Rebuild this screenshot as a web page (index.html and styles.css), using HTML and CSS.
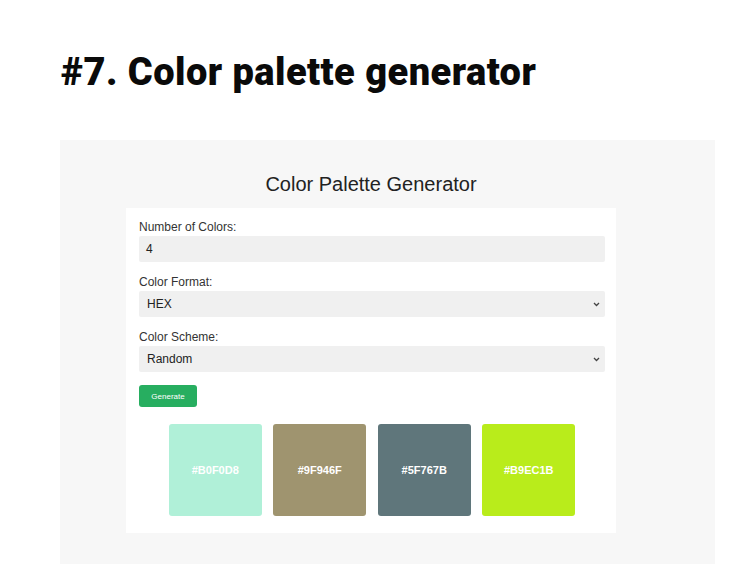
FILE: index.html
```html
<!DOCTYPE html>
<html>
<head>
<meta charset="utf-8">
<link rel="stylesheet" href="styles.css">
</head>
<body>
<h1 class="title">#7. Color palette generator</h1>
<div class="panel">
  <div class="app">
    <h2 class="app-title">Color Palette Generator</h2>
    <div class="card">
      <label class="label">Number of Colors:</label>
      <div class="field">4</div>
      <label class="label">Color Format:</label>
      <div class="field select"><span>HEX</span><svg class="chev" width="7" height="5" viewBox="0 0 7 5"><path d="M1 1l2.5 2.5L6 1" fill="none" stroke="#444" stroke-width="1.3"/></svg></div>
      <label class="label">Color Scheme:</label>
      <div class="field select"><span>Random</span><svg class="chev" width="7" height="5" viewBox="0 0 7 5"><path d="M1 1l2.5 2.5L6 1" fill="none" stroke="#444" stroke-width="1.3"/></svg></div>
      <button class="btn">Generate</button>
      <div class="swatches">
        <div class="swatch s1">#B0F0D8</div>
        <div class="swatch s2">#9F946F</div>
        <div class="swatch s3">#5F767B</div>
        <div class="swatch s4">#B9EC1B</div>
      </div>
    </div>
  </div>
</div>
</body>
</html>
```
FILE: styles.css
```css
html, body { margin: 0; padding: 0; background: #fff; }
body { font-family: "Liberation Sans", Arial, sans-serif; }
.title {
  margin: 0;
  padding: 50px 0 0 61px;
  height: 90px;
  box-sizing: border-box;
  font-family: Roboto, "Liberation Sans", sans-serif;
  font-weight: 900;
  font-size: 38px;
  line-height: 44px;
  color: #0a0a0a;
  letter-spacing: 0.45px;
}
.panel {
  margin: 50px 0 0 60px;
  width: 655px;
  background: #f7f7f7;
  padding: 32px 0 31px 0;
}
.app { margin-left: 66px; width: 490px; }
.app-title {
  margin: 0 0 12px 0;
  text-align: center;
  font-weight: normal;
  font-size: 20px;
  line-height: 24px;
  color: #222;
}
.card {
  background: #fff;
  padding: 12px 11px 17px 13px;
}
.label {
  display: block;
  font-size: 12px;
  line-height: 14px;
  color: #333;
  margin-bottom: 2px;
}
.field {
  height: 26px;
  background: #f0f0f0;
  border-radius: 2px;
  margin-bottom: 13px;
  padding: 0 7px;
  display: flex;
  align-items: center;
  font-size: 12px;
  color: #222;
}
.select { justify-content: space-between; }
.select span { padding-left: 1px; }
.chev { margin-right: -2px; }
.btn {
  display: block;
  margin: 0;
  width: 58px;
  height: 22px;
  border: none;
  border-radius: 3px;
  background: #27ae60;
  color: #fff;
  font-family: "Liberation Sans", Arial, sans-serif;
  font-size: 8px;
  padding: 0;
}
.swatches {
  margin-top: 17px;
  display: flex;
  justify-content: center;
  gap: 11.5px;
}
.swatch {
  width: 93px;
  height: 92px;
  border-radius: 3px;
  display: flex;
  align-items: center;
  justify-content: center;
  color: #fff;
  font-weight: bold;
  font-size: 11px;
}
.s1 { background: #b0f0d8; }
.s2 { background: #9f946f; }
.s3 { background: #5f767b; }
.s4 { background: #b9ec1b; }
```
